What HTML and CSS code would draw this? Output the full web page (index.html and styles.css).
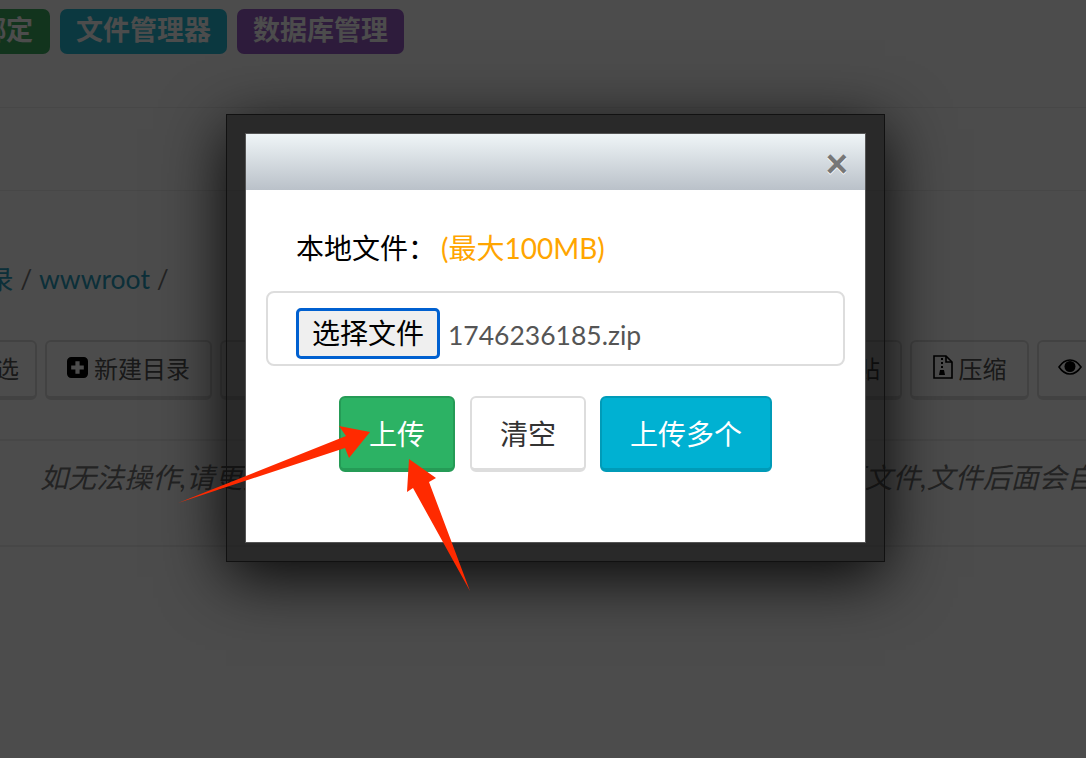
FILE: index.html
```html
<!DOCTYPE html>
<html lang="zh-CN">
<head>
  <meta charset="UTF-8" />
  <meta name="viewport" content="width=device-width, initial-scale=1.0"/>
  <title>文件管理器</title>
  <link rel="stylesheet" href="styles.css">
</head>
<body>

  <div class="page">
    <nav class="tabs">
      <a class="tab tab-green">绑定</a>
      <a class="tab tab-teal">文件管理器</a>
      <a class="tab tab-purple">数据库管理</a>
    </nav>

    <div class="blank-row"></div>

    <div class="crumbs"><a>根目录</a> / <a>wwwroot</a> /</div>

    <div class="toolbar">
      <button class="tool tool-check">全选</button>
      <button class="tool tool-mkdir">
        <svg class="ico" viewBox="0 0 20 20"><path fill="#000" fill-rule="evenodd" d="M4 0h12a4 4 0 0 1 4 4v12a4 4 0 0 1-4 4H4a4 4 0 0 1-4-4V4a4 4 0 0 1 4-4zM8 4v4H4v4h4v4h4v-4h4V8h-4V4z"/></svg>新建目录
      </button>
      <button class="tool tool-hidden">上传文件</button>
      <button class="tool tool-hidden">新建文件</button>
      <button class="tool tool-hidden">复制</button>
      <button class="tool tool-paste">粘贴</button>
      <button class="tool tool-zip">
        <svg class="ico ico-zip" viewBox="0 0 20 24"><path fill="none" stroke="#000" stroke-width="1.6" d="M1 1h12l6 6v16H1z"/><path fill="none" stroke="#000" stroke-width="1.6" d="M13 1v6h6"/><path fill="#000" d="M8 3h2v2H8zM8 7h2v2H8zM8 11h2v2H8zM7 15h4l1 5H6z"/></svg>压缩
      </button>
      <button class="tool tool-eye">
        <svg class="ico ico-eye" viewBox="0 0 24 16"><path fill="none" stroke="#000" stroke-width="1.6" d="M1 8c3-4.500 7-7 11-7s8 2.500 11 7c-3 4.500-7 7-11 7S4 12.500 1 8z"/><circle cx="12" cy="7.500" r="5.500" fill="#000"/></svg>预览
      </button>
    </div>

    <p class="hint">如无法操作,请更换其他浏览器后再次尝试,上传同名文件时会覆盖原文件,文件后面会自动添加时间戳</p>
  </div>

  <div class="overlay"></div>

  <div class="modal">
    <div class="panel">
      <div class="panel-head"><span class="close">×</span></div>
      <div class="panel-body">
        <p class="file-label">本地文件&#65306;<span class="limit">(最大100MB)</span></p>
        <div class="file-box">
          <span class="file-btn">选择文件</span>
          <span class="file-name">1746236185.zip</span>
        </div>
        <div class="actions">
          <button class="btn btn-success">上传</button>
          <button class="btn btn-default">清空</button>
          <button class="btn btn-info">上传多个</button>
        </div>
      </div>
    </div>
  </div>

  <svg class="arrows" viewBox="0 0 1086 758">
    <polygon fill="#ff2a00" points="178,503 346,436 339,426 370,432 349,458 345,448"/>
    <polygon fill="#ff2a00" points="470,591 413,488 407,492 409,459 436,478 429,482"/>
  </svg>

</body>
</html>
```

FILE: styles.css
```css
html, body {
  margin: 0;
  padding: 0;
  height: 758px;
  overflow: hidden;
}

body {
  background: #fff;
  font-family: "Lato", "Noto Sans CJK SC", sans-serif;
  color: #333;
}

.page {
  width: 1086px;
  overflow: hidden;
}

.tabs {
  display: flex;
  gap: 10px;
  padding-top: 9px;
  margin-left: -37px;
}

.tab {
  height: 45px;
  line-height: 41px;
  padding: 0 16px;
  border-radius: 7px;
  font-size: 27px;
  font-weight: 700;
  color: #fff;
}

.tab-green { background: #3fae62; padding-right: 17px; }
.tab-teal { background: #27bcd6; }
.tab-purple { background: #9b5ec9; }

.blank-row {
  height: 82px;
  margin-top: 53px;
  border-top: 1px solid #eee;
  border-bottom: 1px solid #eee;
}

.crumbs {
  margin-top: 70px;
  margin-left: -66px;
  height: 36px;
  line-height: 36px;
  font-size: 26.5px;
  color: #777;
  white-space: nowrap;
}

.crumbs a {
  color: #2a9fc0;
}

.toolbar {
  display: flex;
  gap: 8px;
  margin-top: 43px;
  padding-bottom: 39px;
  border-bottom: 2px solid #eee;
  width: 1300px;
  margin-left: -60px;
}

.tool {
  height: 60px;
  padding: 0 0 4px;
  box-sizing: border-box;
  background: #fff;
  border: 2px solid #ddd;
  border-bottom-width: 4px;
  border-radius: 6px;
  font-family: inherit;
  font-size: 24px;
  color: #555;
  display: flex;
  align-items: center;
  justify-content: center;
  gap: 6px;
  flex: none;
}

.tool-check { width: 97px; justify-content: flex-end; padding-right: 16px; }
.tool-mkdir { width: 167px; }
.tool-hidden { width: 172px; }
.tool-paste { width: 142px; justify-content: flex-end; padding-right: 20px; }
.tool-zip { width: 119px; }
.tool-eye { width: 119px; }

.ico {
  width: 21px;
  height: 21px;
}

.ico-zip {
  width: 20px;
  height: 24px;
}

.ico-eye {
  width: 24px;
  height: 16px;
}

.hint {
  margin: 0;
  padding: 17px 0 49px 40px;
  width: 1300px;
  height: 38px;
  line-height: 38px;
  font-size: 28px;
  font-style: italic;
  color: #777;
  white-space: nowrap;
  border-bottom: 2px solid #eee;
}

.overlay {
  position: absolute;
  inset: 0;
  background: rgba(0, 0, 0, 0.7);
}

/* frame is see-through, the page text shows in it */
.modal {
  position: absolute;
  left: 226px;
  top: 114px;
  width: 621px;
  padding: 18px;
  background: rgba(0, 0, 0, 0.45);
  border: 1px solid #111;
  box-shadow: 0 15px 60px rgba(0, 0, 0, 0.9);
}

.panel {
  background: #fff;
  border: 1px solid #555;
}

.panel-head {
  height: 56px;
  background: linear-gradient(#eff5f7, #bac1c9);
  position: relative;
}

.close {
  position: absolute;
  right: 17px;
  top: 6px;
  font-family: "Liberation Sans", sans-serif;
  font-size: 38px;
  line-height: 48px;
  font-weight: 700;
  color: #777;
  text-shadow: 0 1px 0 #fff;
}

.panel-body {
  height: 352px;
  padding: 0 20px;
}

.file-label {
  margin: 0;
  padding: 38px 0 0 30px;
  height: 40px;
  line-height: 40px;
  font-size: 28px;
  color: #000;
}

.limit {
  color: #ffa500;
  margin-left: 5px;
}

.file-box {
  box-sizing: border-box;
  margin-top: 23px;
  height: 75px;
  width: 579px;
  border: 2px solid #ddd;
  border-radius: 8px;
  display: flex;
  align-items: flex-end;
  padding: 0 0 5px 28px;
  gap: 8px;
}

.file-btn {
  box-sizing: border-box;
  width: 144px;
  height: 51px;
  line-height: 44px;
  text-align: center;
  background: #efefef;
  border: 3px solid #0060d0;
  border-radius: 5px;
  font-size: 28px;
  color: #000;
}

.file-name {
  height: 51px;
  line-height: 54px;
  font-size: 26.5px;
  color: #555;
}

.actions {
  display: flex;
  gap: 15px;
  margin-top: 30px;
  padding-left: 73px;
}

.btn {
  box-sizing: border-box;
  height: 76px;
  padding: 0 28px;
  border-radius: 6px;
  border: 2px solid;
  border-bottom-width: 4px;
  font-family: inherit;
  font-size: 28px;
}

.btn-success { background: #2cb264; border-color: #259b56; color: #fff; }
.btn-default { background: #fff; border-color: #ddd; color: #333; }
.btn-info { background: #00b1d2; border-color: #009bb8; color: #fff; margin-left: -1px; }

.arrows {
  position: absolute;
  left: 0;
  top: 0;
  width: 1086px;
  height: 758px;
}
```
